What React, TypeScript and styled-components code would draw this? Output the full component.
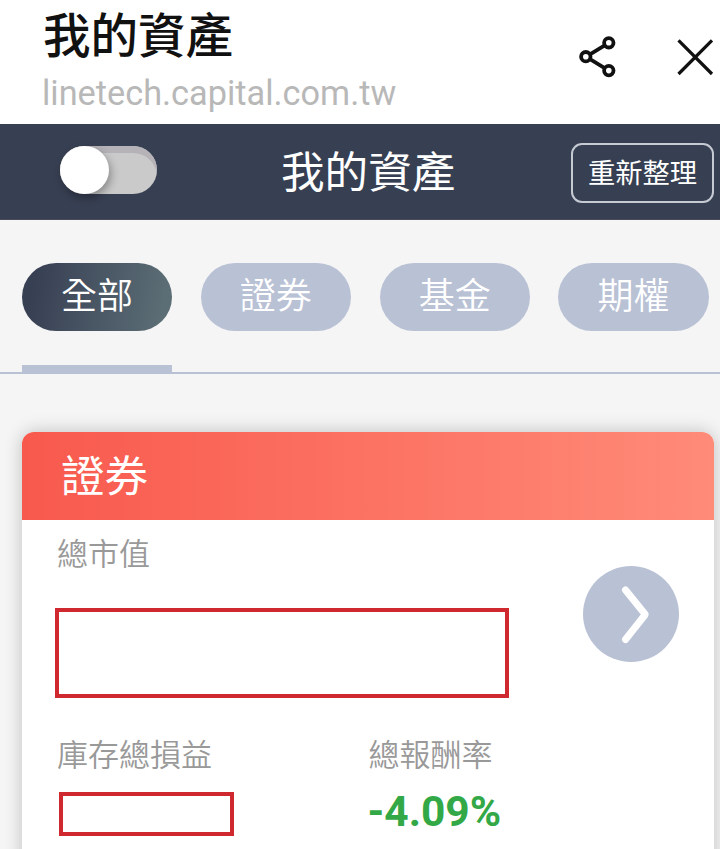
import React from "react";
import styled, { createGlobalStyle } from "styled-components";

const GlobalStyle = createGlobalStyle`
  * { box-sizing: border-box; }
  body {
    margin: 0;
    background: #f5f5f5;
    font-family: Roboto, "Noto Sans CJK TC", sans-serif;
    overflow: hidden;
  }
  button { font-family: inherit; padding: 0; border: 0; background: none; }
  svg { display: block; }
`;

const Screen = styled.main`
  width: 720px;
  height: 849px;
  overflow: hidden;
  display: flex;
  flex-direction: column;
  background: #f5f5f5;
`;

const BrowserBar = styled.header`
  flex: none;
  height: 124px;
  display: flex;
  align-items: flex-start;
  justify-content: space-between;
  padding: 8px 6px 0 43px;
  background: #fff;
`;

const PageTitle = styled.h1`
  margin: 0;
  font-size: 47.5px;
  line-height: 59px;
  font-weight: 500;
  color: #111;
  white-space: nowrap;
`;

const Address = styled.div`
  margin: 6px 0 0 -1px;
  font-size: 34.3px;
  line-height: 41px;
  color: #b8b8b8;
  white-space: nowrap;
`;

const BrowserActions = styled.div`
  display: flex;
  gap: 60px;
  padding-top: 28px;
`;

const IconButton = styled.button`
  display: block;
`;

const AppBar = styled.div`
  flex: none;
  height: 96px;
  display: grid;
  grid-template-columns: 221px 1fr auto;
  align-items: center;
  padding: 0 6px 0 60px;
  background: #373f52;
  border-bottom: 1px solid #4a4c58;
`;

const Toggle = styled.button`
  width: 97px;
  height: 48px;
  margin-top: -4px;
  border-radius: 24px;
  overflow: visible;
  background: #cacaca;
  box-shadow: inset 0 7px 0 #b5b2b8;
`;

const Knob = styled.span`
  display: block;
  width: 49px;
  height: 48px;
  border-radius: 50%;
  background: #fff;
  box-shadow: 2px 4px 9px rgba(0, 0, 0, 0.32);
`;

const AppTitle = styled.h2`
  margin: 4px 0 0;
  font-size: 43.6px;
  line-height: 60px;
  font-weight: 400;
  color: #fff;
`;

const RefreshButton = styled.button`
  justify-self: end;
  width: 143px;
  height: 60px;
  margin-top: 3px;
  padding-top: 2px;
  border: 2px solid #c5cad3;
  border-radius: 11px;
  font-size: 27.3px;
  line-height: 54px;
  font-weight: 400;
  color: #fff;
`;

const Tabs = styled.nav`
  flex: none;
  height: 154px;
  display: flex;
  gap: 28.6px;
  padding: 43px 0 0 22px;
  border-bottom: 2px solid #b9c1d5;
`;

const TabItem = styled.div<{ $active?: boolean }>`
  flex: none;
  width: 150.2px;
  height: 109px;
  border-bottom: 7px solid ${(p) => (p.$active ? "#b9c1d5" : "transparent")};
`;

const TabButton = styled.button<{ $active?: boolean }>`
  display: block;
  width: 100%;
  height: 68px;
  border-radius: 34px;
  background: ${(p) => (p.$active ? "linear-gradient(100deg, #373f53 8%, #5b6d75 92%)" : "#b9c1d5")};
  color: #fff;
  font-size: 36px;
  line-height: 68px;
  font-weight: 350;
`;

const Card = styled.section`
  flex: none;
  width: 692px;
  height: 440px;
  margin: 58px 0 0 22px;
  border-radius: 12px 12px 0 0;
  background: #fff;
  box-shadow: 0 0 18px rgba(0, 0, 0, 0.22);
`;

const CardHeader = styled.h3`
  margin: 0;
  height: 88px;
  padding-left: 39px;
  border-radius: 12px 12px 0 0;
  background: linear-gradient(90deg, #f8594d, #ff8b78);
  color: #fff;
  font-size: 43.5px;
  line-height: 91px;
  font-weight: 400;
`;

const MarketRow = styled.div`
  display: flex;
  justify-content: space-between;
  align-items: flex-start;
  padding: 15px 35px 0 33px;
`;

const Label = styled.div`
  padding-left: 2px;
  font-size: 31px;
  line-height: 40px;
  font-weight: 350;
  color: #999;
  white-space: nowrap;
`;

const ValueBox = styled.div<{ $w: number; $h: number }>`
  width: ${(p) => p.$w}px;
  height: ${(p) => p.$h}px;
  border: 4px solid #cf282f;
`;

const Stack = styled.div<{ $gap: number }>`
  display: flex;
  flex-direction: column;
  gap: ${(p) => p.$gap}px;
`;

const DetailButton = styled.button`
  width: 96px;
  height: 96px;
  margin-top: 31px;
  border-radius: 50%;
  background: #b9c1d5;
`;

const Metrics = styled.div`
  display: grid;
  grid-template-columns: 311.5px 1fr;
  padding: 38px 0 0 33px;
`;

const LossBox = styled(ValueBox)`
  margin-left: 3.5px;
`;

const ReturnRate = styled.div`
  padding-left: 1px;
  font-size: 42.5px;
  line-height: 48px;
  font-weight: 700;
  color: #33a847;
`;

const ShareIcon = () => (
  <svg width="38" height="42" viewBox="0 0 38 42" fill="none" stroke="#111" strokeWidth="3.8">
    <circle cx="6.8" cy="20.7" r="4.7" />
    <circle cx="29.8" cy="6.8" r="4.7" />
    <circle cx="29.8" cy="34.6" r="4.7" />
    <path d="M11 18.3 25.7 9.3M11 23.2 25.7 32.1" />
  </svg>
);

const CloseIcon = () => (
  <svg width="37" height="42" viewBox="0 0 37 42" fill="none" stroke="#111" strokeWidth="3.2">
    <path d="M1.5 4.4 35 38M35 4.4 1.5 38" />
  </svg>
);

const ChevronIcon = () => (
  <svg width="96" height="96" viewBox="0 0 96 96" fill="none" stroke="#fff" strokeWidth="7" strokeLinecap="round" strokeLinejoin="round">
    <path d="M42.5 24 62.3 48.5 42.5 73.5" />
  </svg>
);

const tabs = ["全部", "證券", "基金", "期權"];

export default function App() {
  return (
    <Screen lang="zh-Hant">
      <GlobalStyle />
      <BrowserBar>
        <div>
          <PageTitle>我的資產</PageTitle>
          <Address>linetech.capital.com.tw</Address>
        </div>
        <BrowserActions>
          <IconButton aria-label="分享"><ShareIcon /></IconButton>
          <IconButton aria-label="關閉"><CloseIcon /></IconButton>
        </BrowserActions>
      </BrowserBar>
      <AppBar>
        <Toggle role="switch" aria-checked={false}><Knob /></Toggle>
        <AppTitle>我的資產</AppTitle>
        <RefreshButton>重新整理</RefreshButton>
      </AppBar>
      <Tabs>
        {tabs.map((name, i) => (
          <TabItem key={name} $active={i === 0}>
            <TabButton $active={i === 0}>{name}</TabButton>
          </TabItem>
        ))}
      </Tabs>
      <Card>
        <CardHeader>證券</CardHeader>
        <MarketRow>
          <Stack $gap={33}>
            <Label>總市值</Label>
            <ValueBox $w={454} $h={90} />
          </Stack>
          <DetailButton aria-label="證券明細"><ChevronIcon /></DetailButton>
        </MarketRow>
        <Metrics>
          <Stack $gap={16}>
            <Label>庫存總損益</Label>
            <LossBox $w={175} $h={44} />
          </Stack>
          <Stack $gap={12}>
            <Label>總報酬率</Label>
            <ReturnRate>-4.09%</ReturnRate>
          </Stack>
        </Metrics>
      </Card>
    </Screen>
  );
}
